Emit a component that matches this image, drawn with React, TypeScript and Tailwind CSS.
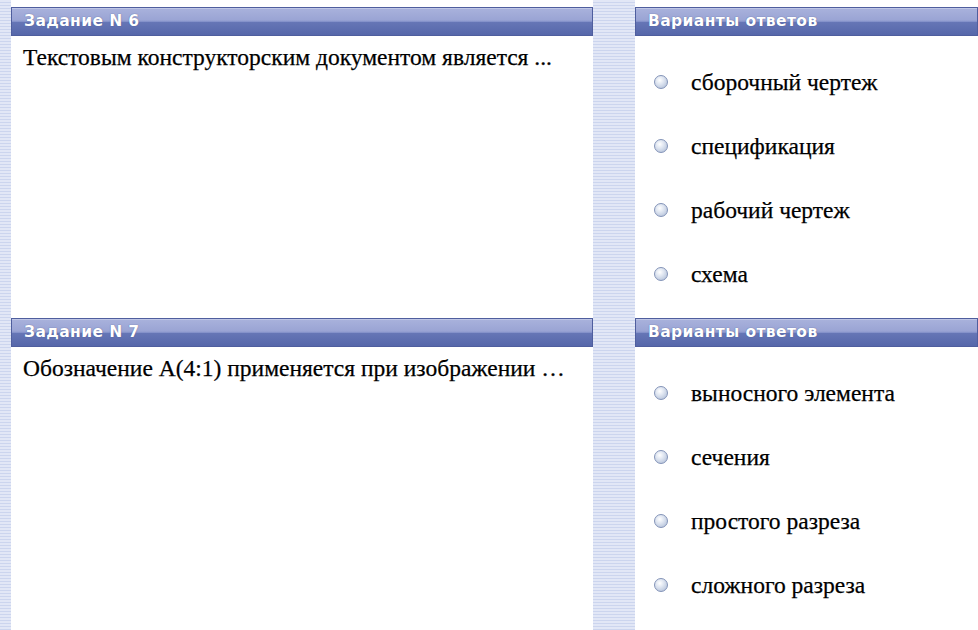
const stripes =
  'bg-[repeating-linear-gradient(to_bottom,#e2e7f6_0px,#e2e7f6_2px,#ccd5ee_2px,#ccd5ee_3px)]'

type Task = {
  no: number
  question: string
  answers: string[]
}

const tasks: Task[] = [
  {
    no: 6,
    question: 'Текстовым конструкторским документом является ...',
    answers: ['сборочный чертеж', 'спецификация', 'рабочий чертеж', 'схема'],
  },
  {
    no: 7,
    question: 'Обозначение A(4:1) применяется при изображении …',
    answers: ['выносного элемента', 'сечения', 'простого разреза', 'сложного разреза'],
  },
]

function Bar({ title }: { title: string }) {
  return (
    <div className="h-[29px] flex items-center px-[12px] border border-[#4f5e9e] bg-[linear-gradient(to_bottom,#a9b2dc_0%,#9aa4d4_45%,#8592ca_50%,#6676b6_52%,#5667aa_100%)] shadow-[inset_0_1px_0_#bfc6e6]">
      <span className="text-white text-[15.5px] font-bold tracking-[0.4px] font-['DejaVu_Sans',sans-serif] [-webkit-text-stroke:0px] [text-shadow:0_0_1px_#3d4b85]">
        {title}
      </span>
    </div>
  )
}

function Radio() {
  return (
    <span className="w-[14px] h-[14px] rounded-full border border-[#8393b8] bg-[radial-gradient(circle_at_40%_35%,#ffffff_0%,#dde4f0_40%,#a9b8d3_100%)] shrink-0" />
  )
}

export default function App() {
  return (
    <div className="w-[978px] h-[630px] flex overflow-hidden bg-white font-['Liberation_Serif',serif] [-webkit-text-stroke:0.25px_#000000]">
      <div className={`w-[11px] shrink-0 ${stripes}`} />

      {/* ── Questions ── */}
      <div className="w-[582px] shrink-0 flex flex-col bg-white">
        {tasks.map((t, i) => (
          <section key={t.no} className={`pt-[7px] flex flex-col ${i === 0 ? 'h-[311px]' : 'flex-1'}`}>
            <Bar title={`Задание N ${t.no}`} />
            <p className="px-[12px] pt-[7px] text-[23.5px] leading-[28px] text-black">{t.question}</p>
          </section>
        ))}
      </div>

      <div className={`w-[42px] shrink-0 ${stripes}`} />

      {/* ── Answers ── */}
      <div className="flex-1 flex flex-col bg-white">
        {tasks.map((t, i) => (
          <section key={t.no} className={`pt-[7px] flex flex-col ${i === 0 ? 'h-[311px]' : 'flex-1'}`}>
            <Bar title="Варианты ответов" />
            <ul className="flex flex-col pt-[32px] gap-[36px]">
              {t.answers.map(a => (
                <li key={a} className="flex items-center h-[28px] pl-[19px] gap-[23px]">
                  <Radio />
                  <span className="text-[23.5px] leading-[28px] text-black">{a}</span>
                </li>
              ))}
            </ul>
          </section>
        ))}
      </div>
    </div>
  )
}
